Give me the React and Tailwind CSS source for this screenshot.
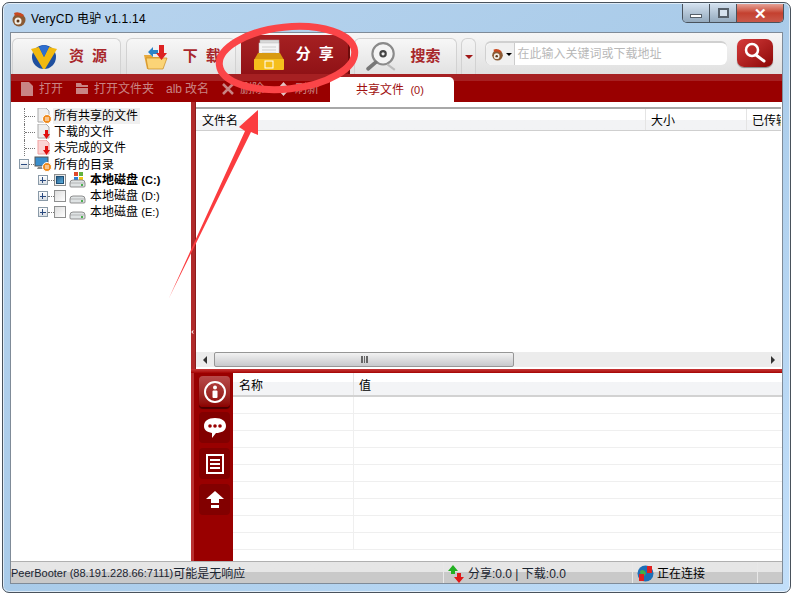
import { ChevronLeft } from "lucide-react";

const NAV_TEXT = "text-[15px] font-bold tracking-[8px] text-[#a8272b]";

function VLogo() {
    return (
        <svg width="28" height="26" viewBox="0 0 28 26">
            <circle cx="14" cy="13" r="12" fill="#1f4f9e" />
            <path d="M1 5 L9 3 L14 13 L19 3 L27 5 L15 25 L13 25 Z" fill="#f2b90f" />
            <path d="M9 3 L14 13 L19 3 L14 1 Z" fill="#2f6fd0" />
        </svg>
    );
}

function FolderDownIcon() {
    return (
        <svg width="26" height="28" viewBox="0 0 26 28">
            <path d="M1 12 L8 12 L10 14 L20 14 L20 26 L4 26 Z" fill="#e8a93a" />
            <path d="M3 15 L24 15 L20 26 L5 26 Z" fill="#fbd477" stroke="#c98a1e" strokeWidth="0.7" />
            <path d="M5 9 L10 4 L10 7 L15 7 L15 11 L10 11 L10 14 Z" fill="#2a84c8" />
            <path d="M16 2 L21 2 L21 10 L24 10 L18.500 17 L13 10 L16 10 Z" fill="#dd2222" />
        </svg>
    );
}

function DrawerIcon() {
    return (
        <svg width="32" height="32" viewBox="0 0 32 32">
            <rect x="7" y="1" width="19" height="16" fill="#d9d9d9" stroke="#aaa" strokeWidth="0.5" />
            <rect x="6" y="4" width="20" height="16" fill="#f4f4f4" stroke="#bbb" strokeWidth="0.5" />
            <path d="M9 8 H23 M9 11 H23 M9 14 H23" stroke="#ccc" />
            <path d="M5 14 L27 14 L31 21 L1 21 Z" fill="#d99a10" />
            <rect x="1" y="20" width="30" height="11" rx="1" fill="#f5bf1c" />
            <rect x="12" y="22" width="8" height="7" fill="none" stroke="#fff" strokeWidth="1" />
        </svg>
    );
}

function MagnifierCdIcon() {
    return (
        <svg width="32" height="30" viewBox="0 0 30 28">
            <circle cx="16" cy="11" r="10" fill="#f4f4f4" stroke="#8a8a8a" strokeWidth="2" />
            <circle cx="16" cy="11" r="3.500" fill="#444" />
            <circle cx="16" cy="11" r="1.500" fill="#eee" />
            <path d="M9 19 L2 25" stroke="#777" strokeWidth="3.500" strokeLinecap="round" />
            <path d="M20 21 L27 26" stroke="#bbb" strokeWidth="2" />
        </svg>
    );
}

function DonkeyIcon({ size = 16 }) {
    return (
        <svg width={size} height={size} viewBox="0 0 16 16">
            <circle cx="8" cy="9" r="6.500" fill="#8a5a34" />
            <circle cx="7" cy="10" r="3.500" fill="#f2eee6" />
            <path d="M3 2 Q8 0 13 4 L11 6 Q7 3 4 5 Z" fill="#c8481f" />
            <circle cx="7" cy="10" r="1.500" fill="#5a3418" />
        </svg>
    );
}

function TabButton({ children, icon, wide }) {
    return (
        <div
            className={`${wide} h-[36px] flex items-center rounded-t-[6px] border border-b-0 border-[#d2d2d2] bg-gradient-to-b from-[#f7f7f7] to-[#e2e2e2]`}
        >
            {icon}
            {children}
        </div>
    );
}

function ToolItem({ icon, label, className }) {
    return (
        <div className={`flex items-center gap-[6px] ${className}`}>
            {icon}
            <span>{label}</span>
        </div>
    );
}

function Connector() {
    return (
        <div className="w-[11px] h-full border-l border-dotted border-[#777] flex items-center">
            <div className="w-full border-t border-dotted border-[#777]"></div>
        </div>
    );
}

function Expander({ minus }) {
    return (
        <div className="relative w-[10px] h-[10px] border border-[#8a9aa8] bg-gradient-to-b from-white to-[#d8dee4] flex items-center justify-center">
            <div className="w-[6px] h-px bg-[#2a4a80]"></div>
            {!minus && (
                <div className="absolute left-[3px] top-[1px] w-px h-[6px] bg-[#2a4a80]"></div>
            )}
        </div>
    );
}

function FileIcon({ badge }) {
    return (
        <svg width="16" height="16" viewBox="0 0 16 16">
            <path d="M2 0 H10 L13 3 V14 H2 Z" fill={badge === "partial" ? "#fbd4d4" : "#eeeeee"} stroke={badge === "partial" ? "#f0a0a0" : "#aaaaaa"} />
            {badge === "share" && <circle cx="11" cy="11" r="4.500" fill="#ef8a1c" stroke="#fff" />}
            {badge === "share" && <path d="M9 10 H13 M9 12 H13" stroke="#fff" />}
            {badge !== "share" && <path d="M9 6 H12 V10 H14 L10.500 15 L7 10 H9 Z" fill="#e01010" />}
        </svg>
    );
}

function ComputerIcon() {
    return (
        <svg width="18" height="16" viewBox="0 0 18 16">
            <rect x="1" y="1" width="13" height="9" fill="#3a8ecc" stroke="#555" />
            <path d="M3 13 H13 L15 11 H4 Z" fill="#888" />
            <circle cx="13" cy="11" r="4.500" fill="#ef8a1c" stroke="#fff" />
            <path d="M11 10 H15 M11 12 H15" stroke="#fff" />
        </svg>
    );
}

function DiskIcon({ windows }) {
    return (
        <svg width="17" height="16" viewBox="0 0 17 16">
            {windows && <rect x="5" y="0" width="4" height="4" fill="#e0492b" />}
            {windows && <rect x="10" y="0" width="4" height="4" fill="#62b23f" />}
            {windows && <rect x="5" y="5" width="4" height="4" fill="#2f7fd4" />}
            {windows && <rect x="10" y="5" width="4" height="4" fill="#f2c417" />}
            <path d="M1 11 Q1 8 4 8 H13 Q16 8 16 11 V14 Q16 15 15 15 H2 Q1 15 1 14 Z" fill="#dfe3e4" stroke="#777" strokeWidth="0.8" />
            <path d="M1 11 H16" stroke="#999" strokeWidth="0.6" />
            <rect x="12" y="12" width="2" height="2" fill="#4caf50" />
        </svg>
    );
}

function DiskRow({ label, drive, checked, bold, last }) {
    return (
        <div className="h-[16px] flex items-center pl-[27px]">
            <Expander />
            <div className="w-[6px] border-t border-dotted border-[#777]"></div>
            <div className="w-[12px] h-[12px] border border-[#8e8f8f] bg-gradient-to-br from-[#ddd] to-white flex items-center justify-center">
                {checked && <div className="w-[8px] h-[8px] bg-gradient-to-br from-[#2a5f8a] to-[#5db0e0] border border-[#1d4f75]"></div>}
            </div>
            <div className="ml-[3px]">
                <DiskIcon windows={last} />
            </div>
            <span className={`ml-[4px] text-[12px] text-black ${bold ? "font-bold" : ""}`}>
                {label} <span className="text-[11px]">{drive}</span>
            </span>
        </div>
    );
}

function TreeRow({ icon, label, active }) {
    return (
        <div className="h-[16px] flex items-center pl-[13px]">
            <Connector />
            <div className="w-[18px] flex justify-center">{icon}</div>
            <span className={`text-[12px] text-black px-[1px] pt-px leading-[15px] ${active ? "bg-[#f0f0f0] pr-[2px]" : ""}`}>
                {label}
            </span>
        </div>
    );
}

function SideButton({ active, children }) {
    return (
        <div
            className={`w-[31px] h-[31px] rounded-[4px] flex items-center justify-center ${
                active
                    ? "bg-gradient-to-b from-[#b84a4a] to-[#8c0000] shadow-[0_2px_1px_#4a0000]"
                    : "bg-[#820000]"
            }`}
        >
            {children}
        </div>
    );
}

function StatusCell({ className, children }) {
    return <div className={`h-full flex items-center pt-[2px] border-r border-[#e8e8e8] ${className}`}>{children}</div>;
}

export default function App() {
    const rows = [0, 1, 2, 3, 4, 5, 6, 7, 8];

    return (
        <div className="relative w-[792px] h-[594px] overflow-hidden bg-white pl-[2px] pr-[1px] pt-[2px] pb-[1px] [font-family:'Liberation_Sans','Noto_Sans_CJK_SC',sans-serif]">
            <div className="h-full flex flex-col rounded-[7px] border border-[#49525c] bg-gradient-to-br from-[#b8d4ee] via-[#a9cbe9] to-[#c2dffa] px-[7px] pb-[8px] shadow-[inset_0_0_0_1px_rgba(255,255,255,0.6)]">
                {/* title bar */}
                <div className="h-[29px] shrink-0 flex items-start justify-between">
                    <div className="flex items-center gap-[4px] pl-[1px] pt-[8px]">
                        <DonkeyIcon />
                        <span className="text-[12px] leading-[16px] tracking-[0.2px] text-black">VeryCD 电驴 v1.1.14</span>
                    </div>
                    <div className="flex h-[19px] mt-px rounded-b-[5px] border border-t-0 border-[#49525c] overflow-hidden mr-[-1px]">
                        <div className="w-[27px] flex items-end justify-center pb-[4px] border-r border-[#49525c] bg-gradient-to-b from-[#d2e0ee] to-[#94aabe]">
                            <div className="w-[12px] h-[4px] bg-white border border-[#56606a]"></div>
                        </div>
                        <div className="w-[27px] flex items-center justify-center border-r border-[#49525c] bg-gradient-to-b from-[#d2e0ee] to-[#94aabe]">
                            <div className="w-[11px] h-[10px] border-2 border-[#56606a] bg-[#d6e2ee]"></div>
                        </div>
                        <div className="w-[46px] flex items-center justify-center text-white text-[15px] font-bold leading-none bg-gradient-to-b from-[#e5a196] via-[#c4402f] to-[#c9584a]">
                            ✕
                        </div>
                    </div>
                </div>

                <div className="flex-1 min-h-0 flex flex-col border border-[#7f8b98] bg-white">
                    {/* top nav */}
                    <div className="h-[41px] shrink-0 flex items-end pl-px pr-[9px] bg-gradient-to-b from-[#f6f6f6] to-[#e0e0e0]">
                        <TabButton wide="w-[109px] pl-[17px] gap-[11px]" icon={<VLogo />}>
                            <span className={NAV_TEXT}>资源</span>
                        </TabButton>
                        <TabButton wide="ml-[5px] w-[110px] pl-[16px] gap-[14px]" icon={<FolderDownIcon />}>
                            <span className={NAV_TEXT}>下载</span>
                        </TabButton>
                        <div className="ml-[5px] w-[109px] h-[39px] flex items-center pl-[12px] gap-[11px] rounded-t-[4px] border-r-2 border-[#6e0c0c] bg-gradient-to-b from-[#a62022] to-[#901216]">
                            <DrawerIcon />
                            <span className="text-[15px] font-bold tracking-[8px] text-white">分享</span>
                        </div>
                        <TabButton wide="ml-[4px] w-[104px] pl-[11px] gap-[13px]" icon={<MagnifierCdIcon />}>
                            <span className="text-[15px] font-bold text-[#a8272b]">搜索</span>
                        </TabButton>
                        <div className="ml-[4px] w-[15px] h-[36px] flex items-center justify-center rounded-t-[6px] border border-b-0 border-[#d2d2d2] bg-gradient-to-b from-[#f4f4f4] to-[#e2e2e2]">
                            <div className="border-x-[4px] border-x-transparent border-t-[4px] border-t-[#a01818]"></div>
                        </div>
                        <div className="ml-[9px] mb-[9px] w-[242px] h-[24px] flex items-center rounded-[6px] border-t-2 border-l border-[#d0d0d0] bg-white">
                            <div className="w-[29px] h-full flex items-center gap-[2px] pl-[5px] border-r border-[#cccccc] bg-[#f0f0f0] rounded-l-[6px]">
                                <DonkeyIcon size={13} />
                                <div className="border-x-[3px] border-x-transparent border-t-[3px] border-t-black"></div>
                            </div>
                            <span className="ml-[2px] text-[12px] text-[#b8b8b8]">在此输入关键词或下载地址</span>
                        </div>
                        <div className="ml-[10px] mb-[7px] w-[36px] h-[28px] flex items-center justify-center rounded-[7px] bg-gradient-to-br from-[#d63a3a] to-[#8c0404] shadow-[0_1px_1px_#888]">
                            <svg width="24" height="22" viewBox="0 0 24 22">
                                <circle cx="9" cy="8" r="6" fill="none" stroke="#fff" strokeWidth="2.500" />
                                <path d="M13 13 L21 19" stroke="#fff" strokeWidth="3" strokeLinecap="round" />
                            </svg>
                        </div>
                    </div>

                    {/* toolbar */}
                    <div className="h-[28px] shrink-0 flex items-end pl-[10px] pr-px text-[12px] text-[#c98484] bg-gradient-to-b from-[#a62022] from-[24%] to-[#990000] to-[24%]">
                        <div className="h-[28px] flex items-center pt-px">
                            <ToolItem
                                className="w-[55px]"
                                label="打开"
                                icon={<svg width="12" height="14" viewBox="0 0 12 14"><path d="M0 0 H8 L12 4 V14 H0 Z" fill="#c98484" /></svg>}
                            />
                            <ToolItem
                                className="w-[90px]"
                                label="打开文件夹"
                                icon={<svg width="12" height="11" viewBox="0 0 12 11"><path d="M0 0 H5 L6 2 H12 V4 H0 Z M0 5 H12 V11 H0 Z" fill="#c98484" /></svg>}
                            />
                            <ToolItem
                                className="w-[56px] !gap-[5px]"
                                label="改名"
                                icon={<span className="text-[12px] w-[14px]">alb</span>}
                            />
                            <ToolItem
                                className="w-[56px]"
                                label="删除"
                                icon={<svg width="12" height="12" viewBox="0 0 12 12"><path d="M1 1 L11 11 M11 1 L1 11" stroke="#c98484" strokeWidth="2.500" /></svg>}
                            />
                            <ToolItem
                                className="w-[52px]"
                                label="刷新"
                                icon={<svg width="11" height="14" viewBox="0 0 11 14"><path d="M5.500 0 L10 5 H1 Z M5.500 14 L1 9 H10 Z" fill="#e3c4c4" /></svg>}
                            />
                        </div>
                        <div className="w-[124px] h-[25px] flex items-center pl-[26px] pt-px rounded-t-[5px] bg-white text-[#a01010] whitespace-pre">
                            共享文件 <span className="text-[11px]"> (0)</span>
                        </div>
                        <div className="flex-1"></div>
                    </div>

                    {/* main area */}
                    <div className="flex-1 min-h-0 flex bg-white">
                        {/* tree */}
                        <div className="w-[180px] shrink-0 pt-[6px]">
                            <TreeRow icon={<FileIcon badge="share" />} label="所有共享的文件" active />
                            <TreeRow icon={<FileIcon badge="down" />} label="下载的文件" />
                            <TreeRow icon={<FileIcon badge="partial" />} label="未完成的文件" />
                            <div className="h-[16px] flex items-center pl-[8px]">
                                <Expander minus />
                                <div className="w-[5px] border-t border-dotted border-[#777]"></div>
                                <ComputerIcon />
                                <span className="ml-[2px] pt-px text-[12px] text-black">所有的目录</span>
                            </div>
                            <DiskRow label="本地磁盘" drive="(C:)" checked bold last />
                            <DiskRow label="本地磁盘" drive="(D:)" />
                            <DiskRow label="本地磁盘" drive="(E:)" />
                        </div>

                        {/* right side */}
                        <div className="flex-1 min-w-0 flex flex-col">
                            <div className="h-[267px] shrink-0 flex flex-col">
                                <div className="flex-1 flex">
                                    <div className="relative w-[5px] bg-[#b02a2a] border-r border-[#8c1c1c]">
                                        <ChevronLeft className="absolute left-[-1px] top-[226px] w-[5px] h-[8px] text-white" strokeWidth={5} />
                                    </div>
                                    <div className="flex-1 min-w-0 flex flex-col pt-[5px] pr-[1px]">
                                        <div className="h-[24px] shrink-0 flex border-t-2 border-b border-t-[#a8a8a8] border-b-[#cfcfcf] text-[12px] text-black bg-gradient-to-b from-white from-50% to-[#f2f3f5] to-50%">
                                            <div className="w-[450px] pl-[6px] pt-[2px] flex items-center border-r border-[#e4e4e4]">文件名</div>
                                            <div className="w-[101px] pl-[5px] pt-[2px] flex items-center border-r border-[#e4e4e4]">大小</div>
                                            <div className="flex-1 pl-[5px] pt-[2px] flex items-center overflow-hidden whitespace-nowrap">已传输</div>
                                        </div>
                                        <div className="flex-1 bg-white"></div>
                                        <div className="h-[15px] shrink-0 flex items-center bg-[#ececec]">
                                            <div className="w-[18px] flex justify-center">
                                                <div className="border-y-[4px] border-y-transparent border-r-[4px] border-r-[#333]"></div>
                                            </div>
                                            <div className="w-[300px] h-[15px] flex items-center justify-center rounded-[2px] border border-[#969696] bg-gradient-to-b from-[#f2f2f2] to-[#c8c9cc]">
                                                <div className="w-[7px] h-[7px] border-x-2 border-[#666] relative">
                                                    <div className="absolute left-[1.500px] top-0 w-px h-full bg-[#666]"></div>
                                                </div>
                                            </div>
                                            <div className="flex-1"></div>
                                            <div className="mr-[6px] border-y-[4px] border-y-transparent border-l-[4px] border-l-[#333]"></div>
                                        </div>
                                        <div className="h-[2px] shrink-0"></div>
                                    </div>
                                </div>
                            </div>

                            <div className="relative flex-1 min-h-0 flex flex-col">
                                <div className="h-[4px] shrink-0 bg-gradient-to-b from-[#c83535] to-[#a50000]"></div>
                                <div className="flex-1 min-h-0 flex">
                                    {/* icon column */}
                                    <div className="w-[42px] shrink-0 flex flex-col gap-[5px] pt-[3px] bg-[#990000] border-l-[3px] border-[#b83232] pl-[5px]">
                                        <SideButton active>
                                            <svg width="24" height="24" viewBox="0 0 24 24">
                                                <circle cx="12" cy="12" r="10" fill="none" stroke="#fff" strokeWidth="2" />
                                                <circle cx="12" cy="7.500" r="2" fill="#fff" />
                                                <rect x="9.500" y="10.500" width="5" height="7.500" rx="1" fill="#fff" />
                                            </svg>
                                        </SideButton>
                                        <SideButton>
                                            <svg width="24" height="22" viewBox="0 0 24 22">
                                                <path d="M12 1 C19 1 23 4 23 9 C23 14 18 16 13 16 L9 21 L9 16 C4 15 1 13 1 9 C1 4 5 1 12 1 Z" fill="#fff" />
                                                <circle cx="7" cy="9" r="1.800" fill="#990000" />
                                                <circle cx="12" cy="9" r="1.800" fill="#990000" />
                                                <circle cx="17" cy="9" r="1.800" fill="#990000" />
                                            </svg>
                                        </SideButton>
                                        <SideButton>
                                            <svg width="18" height="20" viewBox="0 0 18 20">
                                                <rect x="1" y="1" width="16" height="18" fill="none" stroke="#fff" strokeWidth="2" />
                                                <path d="M4 6 H14 M4 10 H14 M4 14 H14" stroke="#fff" strokeWidth="2" />
                                            </svg>
                                        </SideButton>
                                        <SideButton>
                                            <svg width="18" height="18" viewBox="0 0 18 18">
                                                <path d="M9 0 L18 8 H13 V12 H5 V8 H0 Z" fill="#fff" />
                                                <rect x="5" y="14" width="8" height="3" fill="#fff" />
                                            </svg>
                                        </SideButton>
                                    </div>

                                    {/* details table */}
                                    <div className="flex-1 min-w-0 flex flex-col overflow-hidden">
                                        <div className="h-[24px] shrink-0 flex border-b-2 border-[#d2d2d2] text-[12px] text-black bg-gradient-to-b from-white from-40% to-[#f3f4f6] to-40%">
                                            <div className="w-[121px] pl-[6px] pt-[4px] flex items-center border-r border-[#e4e4e4]">名称</div>
                                            <div className="flex-1 pl-[5px] pt-[4px] flex items-center">值</div>
                                        </div>
                                        {rows.map((row) => (
                                            <div key={row} className="h-[17px] shrink-0 flex border-b border-[#efefef]">
                                                <div className="w-[121px] border-r border-[#efefef]"></div>
                                            </div>
                                        ))}
                                    </div>
                                </div>
                            </div>
                        </div>
                    </div>

                    {/* status bar */}
                    <div className="h-[22px] shrink-0 flex text-[12px] text-[#1a2430] border-t border-[#b0b0b0] bg-gradient-to-b from-[#e6e6e6] from-50% to-[#c9c9c9] to-50%">
                        <StatusCell className="w-[433px]">
                            <span className="text-[11px]">PeerBooter (88.191.228.66:7111)</span>可能是无响应
                        </StatusCell>
                        <StatusCell className="w-[189px] pl-[4px] gap-[4px]">
                            <svg width="16" height="18" viewBox="0 0 16 18">
                                <path d="M5 0 L10 6 H7 V9 H3 V6 H0 Z" fill="#22b022" />
                                <path d="M11 18 L6 12 H9 V8 H13 V12 H16 Z" fill="#e01818" />
                            </svg>
                            <span>分享:0.0 | 下载:0.0</span>
                        </StatusCell>
                        <StatusCell className="w-[125px] pl-[4px] gap-[3px]">
                            <svg width="17" height="17" viewBox="0 0 17 17">
                                <circle cx="8.500" cy="8.500" r="8" fill="#1d6fb8" />
                                <path d="M3 6 Q7 3 9 8 Q7 13 4 12 Z" fill="#3fb04a" />
                                <rect x="10" y="1" width="5" height="7" fill="#e02020" />
                                <rect x="2" y="9" width="5" height="7" fill="#e02020" />
                            </svg>
                            <span className="text-black">正在连接</span>
                        </StatusCell>
                        <div className="flex-1"></div>
                    </div>
                </div>
            </div>

            {/* red annotation drawn over the screenshot */}
            <svg className="absolute left-0 top-0 pointer-events-none" width="792" height="594" viewBox="0 0 792 594">
                <ellipse cx="287" cy="58" rx="68" ry="31" fill="none" stroke="#fb4548" strokeWidth="7" transform="rotate(-6 287 58)" />
                <path d="M169 298 L245 131 L239 127 L258 110 L258 135 L251 132 Z" fill="#fb3c3f" />
            </svg>
        </div>
    );
}
